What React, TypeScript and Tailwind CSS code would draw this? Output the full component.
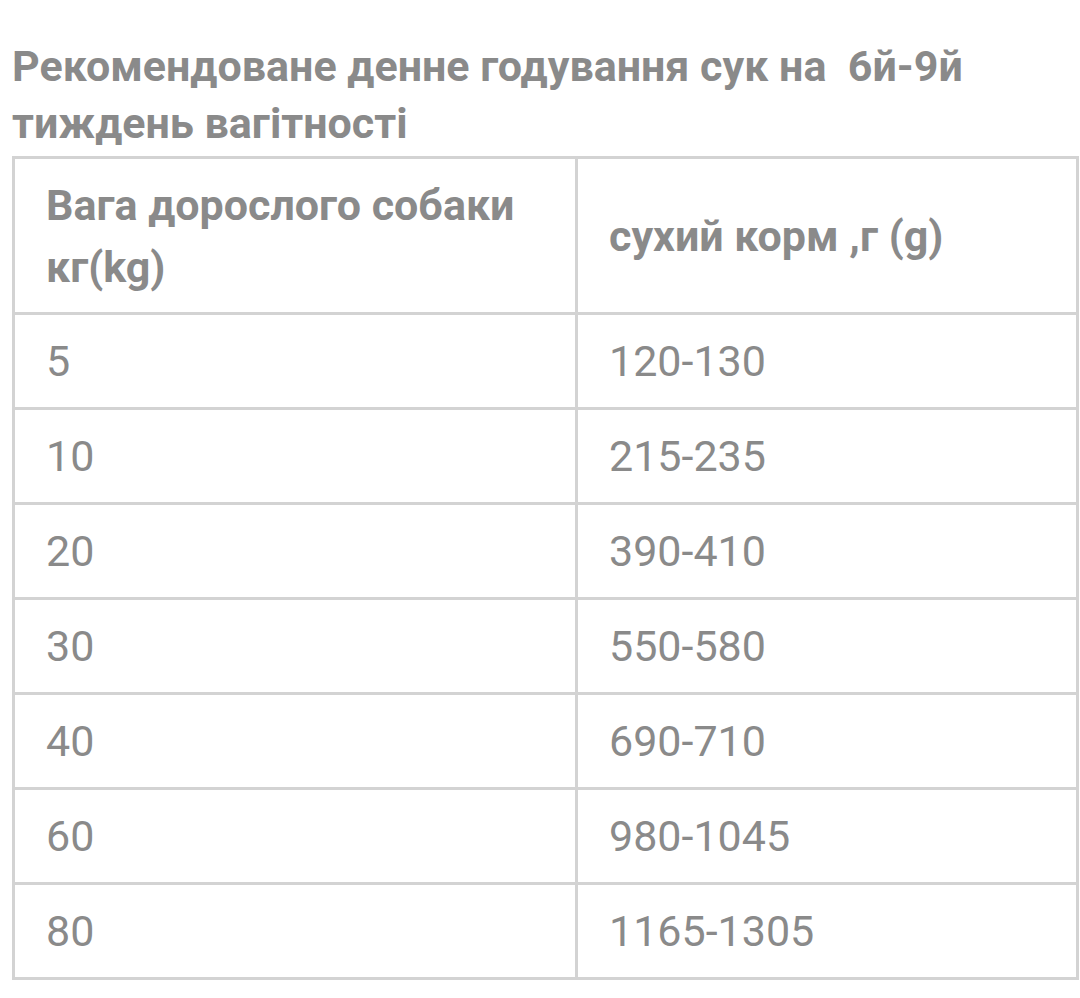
const rows: [string, string][] = [
  ['5', '120-130'],
  ['10', '215-235'],
  ['20', '390-410'],
  ['30', '550-580'],
  ['40', '690-710'],
  ['60', '980-1045'],
  ['80', '1165-1305'],
]

export default function App() {
  return (
    <div className="min-h-screen bg-white font-['Roboto',sans-serif] text-[#8a8a8a]">
      <div className="pl-[12px] pr-[1px] pt-[38px]">
        <h2 className="text-[43px] font-bold leading-[57px] whitespace-pre-wrap">
          {'Рекомендоване денне годування сук на  6й-9й\nтиждень вагітності'}
        </h2>
        <table className="w-[1067px] border-collapse border-[3px] border-[#d3d3d3] mt-[4px]">
          <tbody>
            <tr className="h-[156px]">
              <td className="w-[563px] border-[3px] border-[#d3d3d3] pl-[31px] pr-4 text-[43px] font-bold leading-[62px]">
                Вага дорослого собаки кг(kg)
              </td>
              <td className="border-[3px] border-[#d3d3d3] pl-[31px] pr-4 text-[43px] font-bold leading-[62px]">
                сухий корм ,г (g)
              </td>
            </tr>
            {rows.map(([w, g]) => (
              <tr key={w} className="h-[95px]">
                <td className="border-[3px] border-[#d3d3d3] pl-[31px] text-[43px] leading-[50px]">{w}</td>
                <td className="border-[3px] border-[#d3d3d3] pl-[31px] text-[43px] leading-[50px]">{g}</td>
              </tr>
            ))}
          </tbody>
        </table>
      </div>
    </div>
  )
}
